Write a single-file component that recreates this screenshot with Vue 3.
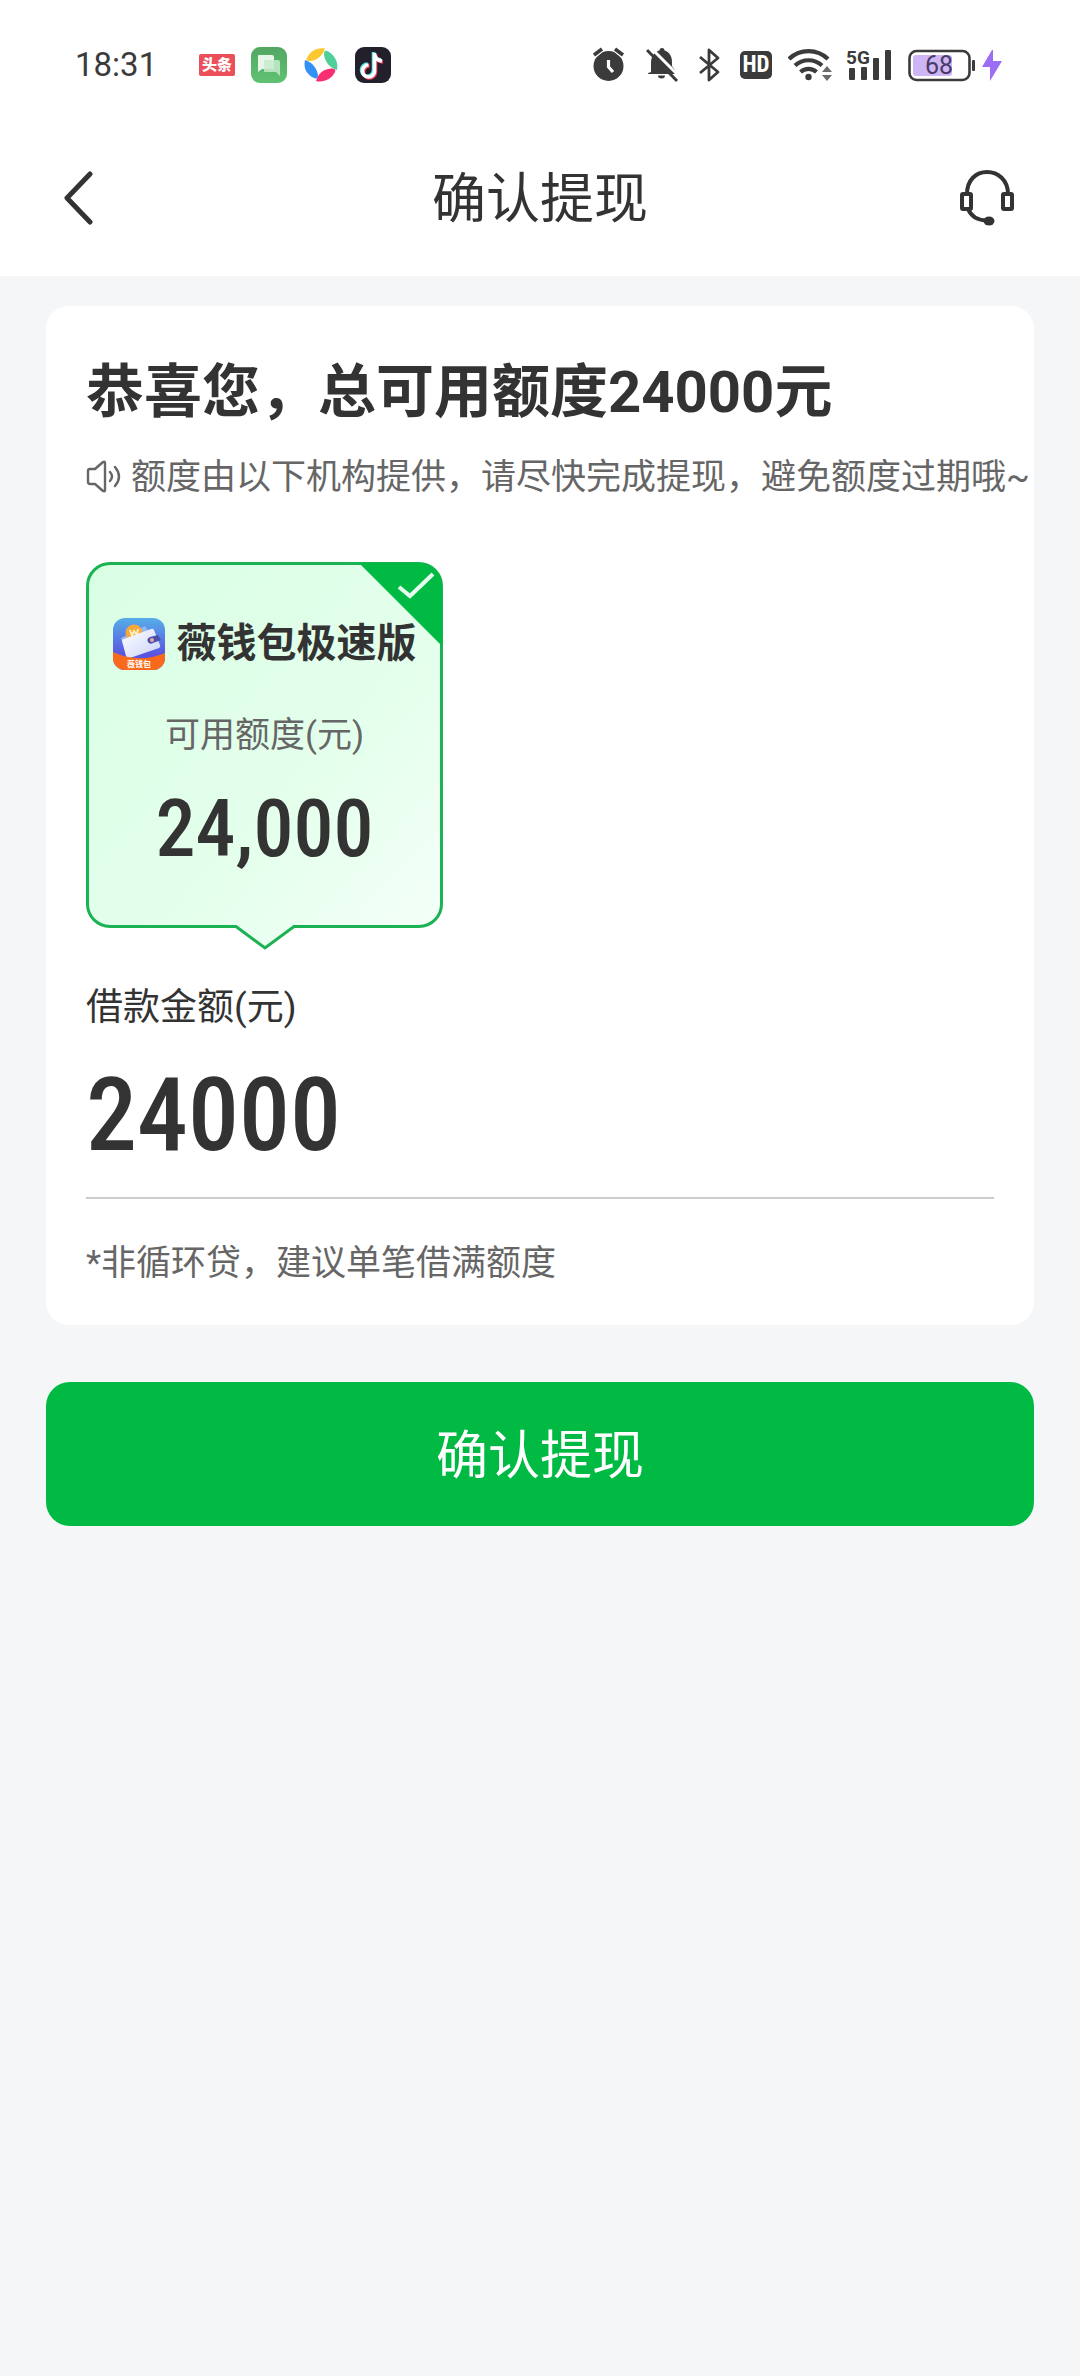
<script setup>
import { ref } from 'vue'

const amount = ref('24000')
const plan = ref('wei')
</script>

<template>
  <div class="page">
    <div class="top">
      <div class="status">
        <time class="clock">18:31</time>
        <div class="apps">
          <span class="toutiao">头条</span>
          <svg width="36" height="36" viewBox="0 0 36 36">
            <defs>
              <linearGradient id="msg" x1="0" y1="0" x2="0" y2="1">
                <stop offset="0" stop-color="#52a763" />
                <stop offset="1" stop-color="#5fc272" />
              </linearGradient>
            </defs>
            <rect width="36" height="36" rx="9" fill="url(#msg)" />
            <path d="M14 13h13a2 2 0 0 1 2 2v14l-4-4H14a1 1 0 0 1-1-1V14a1 1 0 0 1 1-1z" fill="#b5e3bd" />
            <path d="M8 8h13a2 2 0 0 1 2 2v10a2 2 0 0 1-2 2H11l-4 3V9a1 1 0 0 1 1-1z" fill="#e6f6e9" />
            <path d="M13 13h10v7a2 2 0 0 1-2 2h-8z" fill="#cdecd2" />
          </svg>
          <svg width="36" height="36" viewBox="0 0 36 36">
            <path d="M4 11C7 4 14 0 22 1.500C20 8 14 14 7 14C3 14 3 12.500 4 11z" fill="#fbc92f" />
            <path d="M24 4C31 7 36 15 34 23C27 21 22 15 21 8C21 4 22 3 24 4z" fill="#50cf9b" />
            <path d="M32 25C29 32 20 36 13 34C15 27 20 22 28 21.500C32 21.500 33 23 32 25z" fill="#f72f72" />
            <path d="M11 31C4 28 0 21 2 13C9 15 14 21 15 28C15 32 13 32 11 31z" fill="#3290f6" />
          </svg>
          <svg width="36" height="36" viewBox="0 0 36 36">
            <rect width="36" height="36" rx="9" fill="#23202b" />
            <g fill="none" stroke-width="3.600">
              <path d="M18.500 5v18a6 6 0 1 1-6-6M18.500 6c.5 4 3.500 6.500 7.500 7" stroke="#4fe3e6" />
              <path d="M20.500 7v18a6 6 0 1 1-6-6M20.500 8c.5 4 3.500 6.500 7.500 7" stroke="#f2415f" />
              <path d="M19.500 6v18a6 6 0 1 1-6-6M19.500 7c.5 4 3.500 6.500 7.500 7" stroke="#fff" />
            </g>
          </svg>
        </div>
        <div class="system">
          <svg width="46" height="36" viewBox="0 0 46 36">
            <circle cx="15.500" cy="19" r="15" fill="#3b3b3b" />
            <path d="M-1 10l11-9M32 10l-11-9" stroke="#fff" stroke-width="6" />
            <path d="M1 8l8-6M30 8l-8-6" stroke="#3b3b3b" stroke-width="3.500" />
            <path d="M15.500 13v7l4.500 5" fill="none" stroke="#fff" stroke-width="3.200" />
          </svg>
          <svg width="46" height="36" viewBox="0 0 46 36">
            <path d="M5 25V16C5 9 9 4.500 13.500 3.500a2.500 2.500 0 0 1 5 0C23 4.500 26 9 26 15v4l3 4v4H2c0-1 1-1.500 3-2z" fill="#3b3b3b" />
            <path d="M12 28.500h7a3.500 3 0 0 1-7 0z" fill="#3b3b3b" />
            <path d="M3 -1L34 30" stroke="#fff" stroke-width="3" />
            <path d="M1 3L31 34" stroke="#3b3b3b" stroke-width="3" />
          </svg>
          <svg width="34" height="36" viewBox="0 0 34 36">
            <path d="M1 10l18 15-9 8V3l9 8L1 26" fill="none" stroke="#3b3b3b" stroke-width="2.800" stroke-linejoin="round" />
          </svg>
          <span class="hd">HD</span>
          <svg width="51" height="36" viewBox="0 0 51 36">
            <g fill="none" stroke="#3b3b3b" stroke-width="4.200">
              <path d="M1 12a28 28 0 0 1 39 0" />
              <path d="M7 18.500a20 20 0 0 1 27 0" />
              <path d="M12.500 25a12 12 0 0 1 16 0" />
            </g>
            <circle cx="20.500" cy="30" r="3.200" fill="#3b3b3b" />
            <path d="M34 25l5-6 5 6zM34 28l5 6 5-6z" fill="#6b6b6b" />
          </svg>
          <svg class="signal" width="55" height="36" viewBox="0 0 55 36">
            <g fill="#3b3b3b">
              <rect x="3" y="21" width="6" height="12" rx="1" />
              <rect x="15" y="20" width="6" height="13" rx="1" />
              <rect x="27" y="11" width="6" height="22" rx="1" />
              <rect x="39" y="3" width="6" height="30" rx="1" />
            </g>
            <text x="0" y="17">5G</text>
          </svg>
          <svg class="battery" width="67" height="36" viewBox="0 0 67 36">
            <rect x="1.500" y="4" width="60" height="29" rx="7" fill="#fff" stroke="#3b3b3b" stroke-width="2.600" />
            <rect x="5" y="8" width="39" height="21" rx="3" fill="#cdb5f6" />
            <rect x="64" y="13" width="3" height="11" rx="1" fill="#3b3b3b" />
            <text x="31" y="27" text-anchor="middle">68</text>
          </svg>
          <svg width="20" height="36" viewBox="0 0 20 36">
            <path d="M10 3L0 20h8v14l12-20h-9V3z" fill="#9b6ef5" />
          </svg>
        </div>
      </div>

      <header class="nav">
        <button class="icon-btn" type="button" aria-label="返回">
          <svg width="56" height="56" viewBox="0 0 56 56">
            <path d="M26 4L3 28l23 24" fill="none" stroke="#333" stroke-width="5" stroke-linecap="round" stroke-linejoin="round" />
          </svg>
        </button>
        <h1>确认提现</h1>
        <button class="icon-btn" type="button" aria-label="客服">
          <svg width="56" height="58" viewBox="0 0 56 58">
            <g fill="none" stroke="#333" stroke-width="4">
              <path d="M7 25C7 11 16 3 27 3s21 8 21 22" />
              <rect x="2" y="25" width="9" height="15" rx="1" />
              <rect x="43" y="25" width="9" height="15" rx="1" />
              <path d="M8 40c3 7 9 11 18 11.500" />
            </g>
            <ellipse cx="29" cy="52" rx="5.500" ry="4.500" fill="#333" />
          </svg>
        </button>
      </header>
    </div>

    <main>
      <section class="card">
        <h2>恭喜您，总可用额度24000元</h2>
        <p class="notice">
          <svg width="36" height="36" viewBox="0 0 36 36">
            <g fill="none" stroke="#666" stroke-width="2.400" stroke-linejoin="round" stroke-linecap="round">
              <path d="M4 9h5l8-7q2-1 2 1v27q0 2-2 1l-8-7H4q-2 0-2-2V11q0-2 2-2z" />
              <path d="M24 12q4 4.500 0 9M29 7q8 9.500 0 19" />
            </g>
          </svg>
          <span>额度由以下机构提供，请尽快完成提现，避免额度过期哦~</span>
        </p>

        <label class="plan">
          <svg class="plan-bg" width="357" height="388" viewBox="0 0 357 388">
            <defs>
              <linearGradient id="mint" x1="0" y1="0" x2="1" y2="1">
                <stop offset="0" stop-color="#d9fee4" />
                <stop offset="0.600" stop-color="#e4ffec" />
                <stop offset="1" stop-color="#f5fff9" />
              </linearGradient>
            </defs>
            <path d="M24 1.500H333a22.500 22.500 0 0 1 22.500 22.500V342a22.500 22.500 0 0 1-22.500 22.500H208L179 386 150 364.500H24A22.500 22.500 0 0 1 1.500 342V24A22.500 22.500 0 0 1 24 1.500z" fill="url(#mint)" stroke="#1bb254" stroke-width="3" />
            <path d="M273 1H333a23 23 0 0 1 23 23V84z" fill="#00ba43" />
            <path d="M313 25l11 9 23-22" fill="none" stroke="#e8fff0" stroke-width="4" />
          </svg>
          <input v-model="plan" class="plan-radio" type="radio" name="plan" value="wei" />
          <span class="plan-name">
            <svg class="logo" width="52" height="52" viewBox="0 0 52 52">
              <defs>
                <linearGradient id="sky" x1="0" y1="0" x2="0" y2="1">
                  <stop offset="0" stop-color="#55aee8" />
                  <stop offset="0.700" stop-color="#5a55e0" />
                </linearGradient>
                <linearGradient id="wallet" x1="0" y1="0" x2="1" y2="1">
                  <stop offset="0" stop-color="#fff" />
                  <stop offset="1" stop-color="#c9d2fb" />
                </linearGradient>
                <clipPath id="tile"><rect width="52" height="52" rx="12" /></clipPath>
              </defs>
              <g clip-path="url(#tile)">
                <rect width="52" height="52" fill="url(#sky)" />
                <path d="M8 20l24-12 4 6-26 12z" fill="#92b6f6" />
                <circle cx="21" cy="15" r="8.500" fill="#f9a83a" />
                <path d="M17 12l2 6 2-5 3 4 1-6" fill="none" stroke="#fff3c8" stroke-width="1.800" />
                <path d="M9 23q0-2 2-2l27-10q2-1 3 1l6 15q1 2-1 3L17 40q-3 1-4-2z" fill="url(#wallet)" />
                <path d="M45 17l-8 2q-4 2-2 5t5 1l8-3z" fill="#4d4fae" />
                <circle cx="39" cy="22" r="2" fill="#e6a9a0" />
                <path d="M0 34q26 12 52 1v17H0z" fill="#f96a1c" />
                <text x="26" y="49" text-anchor="middle">薇钱包</text>
              </g>
            </svg>
            <strong>薇钱包极速版</strong>
          </span>
          <span class="plan-label">可用额度(元)</span>
          <span class="plan-amount">24,000</span>
        </label>

        <label class="field-label" for="amount">借款金额(元)</label>
        <input id="amount" v-model="amount" class="amount" type="text" inputmode="numeric" />
        <p class="note">*非循环贷，建议单笔借满额度</p>
      </section>

      <button class="submit" type="button">确认提现</button>
    </main>
  </div>
</template>

<style>
body {
  margin: 0;
  background: #f4f6f8;
}
</style>

<style scoped>
.page {
  min-height: 100vh;
  background: #f4f6f8;
  color: #333;
  font-family: Roboto, "Noto Sans CJK SC", sans-serif;
  font-size: 35px;
  line-height: 52px;
}

svg {
  display: block;
  flex: none;
}

h1,
h2,
p {
  margin: 0;
}

.top {
  background: #fff;
}

.status {
  display: flex;
  align-items: center;
  height: 130px;
  padding: 0 78px 0 75px;
}

.clock {
  min-width: 124px;
  font-size: 33px;
  color: #3b3b3b;
}

.apps {
  display: flex;
  align-items: center;
  gap: 16px;
}

.toutiao {
  width: 36px;
  height: 22px;
  border-radius: 2px;
  background: #ea4f5a;
  color: #fff;
  font-size: 15px;
  font-weight: 900;
  line-height: 22px;
  text-align: center;
}

.system {
  display: flex;
  align-items: center;
  gap: 7px;
  margin-left: auto;
}

.hd {
  width: 32px;
  height: 28px;
  margin-right: 9px;
  border-radius: 5px;
  background: #3b3b3b;
  color: #fff;
  font-family: "Roboto Condensed", Roboto, sans-serif;
  font-size: 23px;
  font-weight: 700;
  line-height: 28px;
  text-align: center;
}

.signal text {
  fill: #3b3b3b;
  font-size: 19px;
  font-weight: 700;
}

.battery text {
  fill: #4a3a66;
  font-size: 25px;
}

.nav {
  display: flex;
  align-items: center;
  justify-content: space-between;
  height: 136px;
  padding: 0 64px 10px;
}

.nav h1 {
  padding-top: 4px;
  font-size: 54px;
  font-weight: 400;
  line-height: 76px;
}

.icon-btn {
  padding: 0;
  border: 0;
  background: none;
}

main {
  padding: 30px 46px;
}

.card {
  padding: 46px 40px 35px;
  border-radius: 23px;
  background: #fff;
}

.card h2 {
  font-size: 58px;
  font-weight: 700;
  line-height: 80px;
  white-space: nowrap;
}

.notice {
  display: flex;
  align-items: center;
  gap: 9px;
  margin-top: 20px;
  color: #666;
  white-space: nowrap;
}

.plan {
  position: relative;
  display: flex;
  flex-direction: column;
  align-items: center;
  box-sizing: border-box;
  width: 357px;
  height: 388px;
  margin-top: 58px;
  padding-top: 50px;
}

.plan-bg {
  position: absolute;
  top: 0;
  left: 0;
}

.plan-radio {
  position: absolute;
  top: 0;
  right: 0;
  width: 80px;
  height: 80px;
  margin: 0;
  opacity: 0;
}

.plan-name,
.plan-label,
.plan-amount {
  position: relative;
}

.plan-name {
  display: flex;
  align-items: center;
  gap: 12px;
  height: 64px;
}

.plan-name strong {
  font-size: 40px;
  font-weight: 700;
  white-space: nowrap;
}

.logo text {
  fill: #fff;
  font-size: 8px;
  font-weight: 700;
}

.plan-label {
  margin-top: 34px;
  color: #666;
}

.plan-amount {
  margin-top: 27px;
  font-family: "Roboto Condensed", Roboto, sans-serif;
  font-size: 80px;
  font-weight: 500;
  line-height: 80px;
}

.field-label {
  display: block;
  margin-top: 32px;
  font-size: 37px;
}

.amount {
  display: block;
  box-sizing: border-box;
  width: 100%;
  height: 139px;
  margin-top: 26px;
  padding: 0 0 27px;
  border: 0;
  border-bottom: 2px solid #ccc;
  outline: 0;
  background: none;
  color: #333;
  font-family: "Roboto Condensed", Roboto, sans-serif;
  font-size: 102px;
  font-weight: 500;
}

.note {
  margin-top: 39px;
  color: #666;
}

.submit {
  display: block;
  width: 100%;
  height: 144px;
  margin-top: 57px;
  padding: 0 0 6px;
  border: 0;
  border-radius: 24px;
  background: #00ba43;
  color: #fff;
  font-family: inherit;
  font-size: 52px;
}
</style>
